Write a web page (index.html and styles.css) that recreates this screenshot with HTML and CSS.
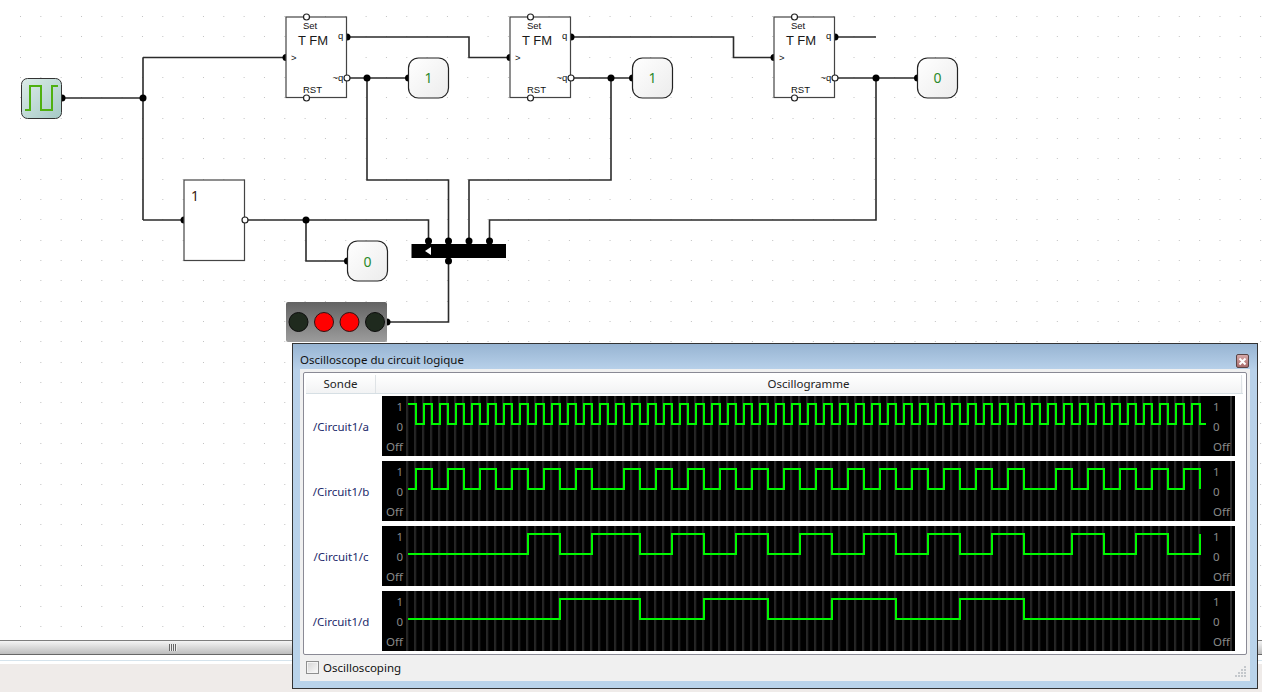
FILE: index.html
```html
<!DOCTYPE html>
<html lang="en">
<head>
    <meta charset="UTF-8">
    <title>Oscilloscope du circuit logique</title>
    <link rel="stylesheet" href="styles.css">
</head>
<body>
    <div class="canvas">
        <svg class="circuit" width="1262" height="640" viewBox="0 0 1262 640">
            <defs>
                <linearGradient id="clockFill" x1="0" y1="0" x2="1" y2="1">
                    <stop offset="0" stop-color="#dcebe8"/>
                    <stop offset="1" stop-color="#a5c9c6"/>
                </linearGradient>
                <linearGradient id="displayFill" x1="0" y1="0" x2="1" y2="1">
                    <stop offset="0" stop-color="#ffffff"/>
                    <stop offset="1" stop-color="#ececec"/>
                </linearGradient>
                <linearGradient id="ledFill" x1="0" y1="0" x2="0" y2="1">
                    <stop offset="0" stop-color="#636363"/>
                    <stop offset="1" stop-color="#9c9c9c"/>
                </linearGradient>
            </defs>

            <!-- grid dots -->
            <path class="dots" d="M20 16.5H1262M20 36.5H1262M20 57.5H1262M20 77.5H1262M20 97.5H1262M20 118.5H1262M20 138.5H1262M20 158.5H1262M20 179.5H1262M20 199.5H1262M20 219.5H1262M20 240.5H1262M20 260.5H1262M20 280.5H1262M20 301.5H1262M20 321.5H1262M20 341.5H1262M20 362.5H1262M20 382.5H1262M20 402.5H1262M20 423.5H1262M20 443.5H1262M20 463.5H1262M20 484.5H1262M20 504.5H1262M20 524.5H1262M20 545.5H1262M20 565.5H1262M20 585.5H1262M20 606.5H1262M20 626.5H1262"/>

            <!-- wires -->
            <path class="wire" d="M62 98H143M143 57.5V220M143 57.5H285M143 220H183"/>
            <path class="wire" d="M348 37H469V57.5H509M571 37H733.5V57.5H773M836 37H876"/>
            <path class="wire" d="M347 78H408M571 78H632M835 78H917"/>
            <path class="wire" d="M367 78V180H448.5V243M611 78V180H469V243M876 78V220H489.5V243"/>
            <path class="wire" d="M245 220H428.5V243M306 220V261H346M448.5 261V322H389"/>

            <!-- clock -->
            <circle class="pin" cx="62" cy="98" r="3.5"/>
            <rect class="clock" x="21.5" y="78.5" width="40" height="40" rx="6"/>
            <path class="clock-wave" d="M25 110H30V86H41V110H52V86H58"/>

            <!-- flip-flops -->
            <g>
                <circle class="pin" cx="347" cy="37" r="3.5"/>
                <circle class="pin" cx="286" cy="57.5" r="3.5"/>
                <rect class="block" x="286" y="17" width="60.5" height="80.5"/>
                <text class="small" x="303" y="29">Set</text>
                <text class="name" x="298" y="44.5">T FM</text>
                <text class="small" x="338" y="39">q</text>
                <text class="small" x="291" y="61">&gt;</text>
                <text class="small" x="332.5" y="81">~q</text>
                <text class="small" x="303" y="93">RST</text>
                <circle class="pin-open" cx="306.5" cy="17" r="3"/>
                <circle class="pin-open" cx="306.5" cy="98" r="3"/>
                <circle class="pin-open" cx="347" cy="78" r="3"/>
            </g>
            <g transform="translate(224 0)">
                <circle class="pin" cx="347" cy="37" r="3.5"/>
                <circle class="pin" cx="286" cy="57.5" r="3.5"/>
                <rect class="block" x="286" y="17" width="60.5" height="80.5"/>
                <text class="small" x="303" y="29">Set</text>
                <text class="name" x="298" y="44.5">T FM</text>
                <text class="small" x="338" y="39">q</text>
                <text class="small" x="291" y="61">&gt;</text>
                <text class="small" x="332.5" y="81">~q</text>
                <text class="small" x="303" y="93">RST</text>
                <circle class="pin-open" cx="306.5" cy="17" r="3"/>
                <circle class="pin-open" cx="306.5" cy="98" r="3"/>
                <circle class="pin-open" cx="347" cy="78" r="3"/>
            </g>
            <g transform="translate(488 0)">
                <circle class="pin" cx="347" cy="37" r="3.5"/>
                <circle class="pin" cx="286" cy="57.5" r="3.5"/>
                <rect class="block" x="286" y="17" width="60.5" height="80.5"/>
                <text class="small" x="303" y="29">Set</text>
                <text class="name" x="298" y="44.5">T FM</text>
                <text class="small" x="338" y="39">q</text>
                <text class="small" x="291" y="61">&gt;</text>
                <text class="small" x="332.5" y="81">~q</text>
                <text class="small" x="303" y="93">RST</text>
                <circle class="pin-open" cx="306.5" cy="17" r="3"/>
                <circle class="pin-open" cx="306.5" cy="98" r="3"/>
                <circle class="pin-open" cx="347" cy="78" r="3"/>
            </g>

            <!-- inverter -->
            <circle class="pin" cx="184" cy="220" r="3.5"/>
            <rect class="block" x="184" y="180" width="60.5" height="80.5"/>
            <text class="gate-label" x="191" y="201">1</text>
            <circle class="pin-open" cx="245" cy="220" r="3"/>

            <!-- displays -->
            <circle class="pin" cx="408.5" cy="78" r="3.5"/>
            <rect class="display" x="408.5" y="58" width="40" height="40" rx="10"/>
            <text class="value" x="428.5" y="83">1</text>
            <circle class="pin" cx="632.5" cy="78" r="3.5"/>
            <rect class="display" x="632.5" y="58" width="40" height="40" rx="10"/>
            <text class="value" x="652.5" y="83">1</text>
            <circle class="pin" cx="917.5" cy="78" r="3.5"/>
            <rect class="display" x="917.5" y="58" width="40" height="40" rx="10"/>
            <text class="value" x="937.5" y="83">0</text>
            <circle class="pin" cx="347.5" cy="261" r="3.5"/>
            <rect class="display" x="347.5" y="241" width="40" height="40" rx="10"/>
            <text class="value" x="367.5" y="267">0</text>

            <!-- splitter bus -->
            <rect class="bus" x="411.5" y="244" width="94.5" height="14"/>
            <path class="bus-arrow" d="M425 251L431 247V255Z"/>

            <!-- led bar -->
            <circle class="pin" cx="387" cy="322" r="3.5"/>
            <rect class="led-box" x="286" y="302" width="101" height="40" rx="2"/>
            <circle class="led-off" cx="298.5" cy="322" r="9.5"/>
            <circle class="led-on" cx="324" cy="322" r="9.5"/>
            <circle class="led-on" cx="349.5" cy="322" r="9.5"/>
            <circle class="led-off" cx="375" cy="322" r="9.5"/>

            <!-- junctions and bus pins -->
            <circle class="pin" cx="143" cy="98" r="3.5"/>
            <circle class="pin" cx="367" cy="78" r="3.5"/>
            <circle class="pin" cx="611" cy="78" r="3.5"/>
            <circle class="pin" cx="876" cy="78" r="3.5"/>
            <circle class="pin" cx="306" cy="220" r="3.5"/>
            <circle class="pin" cx="428.5" cy="241" r="3.5"/>
            <circle class="pin" cx="448.5" cy="241" r="3.5"/>
            <circle class="pin" cx="469" cy="241" r="3.5"/>
            <circle class="pin" cx="489.5" cy="241" r="3.5"/>
            <circle class="pin" cx="448.5" cy="261" r="3.5"/>
        </svg>
    </div>

    <div class="splitter"><span class="splitter-grip"></span></div>
    <div class="status-strip"></div>

    <!-- Oscilloscope window -->
    <div class="scope-window">
        <div class="scope-title">
            <span>Oscilloscope du circuit logique</span>
            <button class="close-btn" aria-label="Fermer">
                <svg width="9" height="9" viewBox="0 0 9 9"><path d="M1.5 1.5L7.5 7.5M7.5 1.5L1.5 7.5"/></svg>
            </button>
        </div>
        <div class="scope-client">
            <div class="scope-grid">
                <div class="grid-header">
                    <div class="col-probe">Sonde</div>
                    <div class="col-trace">Oscillogramme</div>
                </div>

                <div class="rows">
                    <div class="row">
                        <div class="probe">/Circuit1/a</div>
                        <div class="panel">
                            <div class="scale scale-left"><span>1</span><span>0</span><span>Off</span></div>
                            <svg class="trace" width="800" height="60" viewBox="0 0 800 60">
                                <path d="M2 8H10v20h8v-20h8v20h8v-20h8v20h8v-20h8v20h8v-20h8v20h8v-20h8v20h8v-20h8v20h8v-20h8v20h8v-20h8v20h8v-20h8v20h8v-20h8v20h8v-20h8v20h8v-20h8v20h8v-20h8v20h8v-20h8v20h8v-20h8v20h8v-20h8v20h8v-20h8v20h8v-20h8v20h8v-20h8v20h8v-20h8v20h8v-20h8v20h8v-20h8v20h8v-20h8v20h8v-20h8v20h8v-20h8v20h8v-20h8v20h8v-20h8v20h8v-20h8v20h8v-20h8v20h8v-20h8v20h8v-20h8v20h8v-20h8v20h8v-20h8v20h8v-20h8v20h8v-20h8v20h8v-20h8v20h8v-20h8v20h8v-20h8v20h8v-20h8v20h8v-20h8v20h8v-20h8v20h8v-20h8v20h8v-20h8v20h8v-20h8v20h8v-20h8v20h8v-20h8v20h8v-20h8v20h8v-20h8v20h8v-20h8v20h8v-20h8v20"/>
                            </svg>
                            <div class="scale scale-right"><span>1</span><span>0</span><span>Off</span></div>
                        </div>
                    </div>
                    <div class="row">
                        <div class="probe">/Circuit1/b</div>
                        <div class="panel">
                            <div class="scale scale-left"><span>1</span><span>0</span><span>Off</span></div>
                            <svg class="trace" width="800" height="60" viewBox="0 0 800 60">
                                <path d="M2 28H10v-20h16v20h16v-20h16v20h16v-20h16v20h16v-20h16v20h16v-20h16v20h16v-20h16v20h32v-20h16v20h16v-20h16v20h16v-20h16v20h16v-20h16v20h16v-20h16v20h16v-20h16v20h16v-20h16v20h16v-20h16v20h16v-20h16v20h16v-20h16v20h16v-20h16v20h16v-20h16v20h16v-20h16v20h32v-20h16v20h16v-20h16v20h16v-20h16v20h16v-20h16v20h16v-20h16v20"/>
                            </svg>
                            <div class="scale scale-right"><span>1</span><span>0</span><span>Off</span></div>
                        </div>
                    </div>
                    <div class="row">
                        <div class="probe">/Circuit1/c</div>
                        <div class="panel">
                            <div class="scale scale-left"><span>1</span><span>0</span><span>Off</span></div>
                            <svg class="trace" width="800" height="60" viewBox="0 0 800 60">
                                <path d="M2 28H122V8H154V28H186V8H234V28H266V8H298V28H330V8H362V28H394V8H426V28H458V8H490V28H522V8H554V28H586V8H618V28H666V8H698V28H730V8H762V28H794V8"/>
                            </svg>
                            <div class="scale scale-right"><span>1</span><span>0</span><span>Off</span></div>
                        </div>
                    </div>
                    <div class="row">
                        <div class="probe">/Circuit1/d</div>
                        <div class="panel">
                            <div class="scale scale-left"><span>1</span><span>0</span><span>Off</span></div>
                            <svg class="trace" width="800" height="60" viewBox="0 0 800 60">
                                <path d="M2 28H154V8H234V28H298V8H362V28H426V8H490V28H554V8H618V28H794"/>
                            </svg>
                            <div class="scale scale-right"><span>1</span><span>0</span><span>Off</span></div>
                        </div>
                    </div>
                </div>
            </div>

            <div class="scope-footer">
                <label class="check"><span class="check-box"></span>Oscilloscoping</label>
                <svg class="resize-grip" width="11" height="12" viewBox="0 0 11 12">
                    <path d="M9 0h2v2H9zM6 3h2v2H6zM9 3h2v2H9zM3 6h2v2H3zM6 6h2v2H6zM9 6h2v2H9zM0 9h2v2H0zM3 9h2v2H3zM6 9h2v2H6zM9 9h2v2H9z"/>
                </svg>
            </div>
        </div>
    </div>
</body>
</html>
```

FILE: styles.css
```css
body {
    margin: 0;
    height: 100vh;
    overflow: hidden;
    display: flex;
    flex-direction: column;
    background: #efebe9;
    font-family: 'Noto Sans', sans-serif;
}

/* circuit canvas */
.canvas {
    height: 640px;
    flex: none;
    background: white;
}
.circuit {
    display: block;
}
.dots {
    fill: none;
    stroke: #c2c2c2;
    stroke-width: 1;
    stroke-dasharray: 1 19.33;
}
.wire {
    fill: none;
    stroke: #2b2b2b;
    stroke-width: 1.6;
}
.block {
    fill: white;
    stroke: #444;
    stroke-width: 1.2;
}
.pin {
    fill: black;
}
.pin-open {
    fill: white;
    stroke: #222;
    stroke-width: 1.2;
}
.clock {
    fill: url(#clockFill);
    stroke: #333;
}
.clock-wave {
    fill: none;
    stroke: #4fb010;
    stroke-width: 2;
}
.display {
    fill: url(#displayFill);
    stroke: #222;
    stroke-width: 1.2;
}
.value {
    font-size: 14px;
    fill: #2a8a2a;
    text-anchor: middle;
}
.small {
    font-family: 'Liberation Sans', sans-serif;
    font-size: 9.5px;
    fill: #111;
}
.name {
    font-family: 'Liberation Sans', sans-serif;
    font-size: 13px;
    fill: #1a1a1a;
}
.gate-label {
    font-size: 14px;
    fill: #3a1a10;
}
.bus {
    fill: black;
}
.bus-arrow {
    fill: white;
}
.led-box {
    fill: url(#ledFill);
}
.led-off {
    fill: #1f2a1e;
    stroke: #0c0c0c;
}
.led-on {
    fill: #ff0000;
    stroke: #301010;
}

/* bottom of the main window */
.splitter {
    height: 13px;
    flex: none;
    display: flex;
    align-items: center;
    border-top: 1px solid #7d7d7d;
    border-bottom: 1px solid #666;
    background: linear-gradient(#f4f4f4, #bdbdbd);
}
.splitter-grip {
    width: 8px;
    height: 7px;
    margin-left: 169px;
    background: repeating-linear-gradient(90deg, #666 0, #666 1px, #eee 1px, #eee 2px);
}
.status-strip {
    height: 9px;
    flex: none;
    box-sizing: border-box;
    background: linear-gradient(white 5px, #d5e3ec 5px, #d5e3ec 6px, white 6px);
}

/* oscilloscope window */
.scope-window {
    position: absolute;
    left: 292px;
    top: 343px;
    width: 966px;
    height: 346px;
    box-sizing: border-box;
    border: 1px solid #333;
    padding: 0 7px 7px;
    display: flex;
    flex-direction: column;
    background: linear-gradient(#97b4d2, #b8d1ea 26px, #b9d3ea);
}
.scope-title {
    height: 25px;
    flex: none;
    box-sizing: border-box;
    display: flex;
    justify-content: space-between;
    align-items: flex-end;
    padding-bottom: 2px;
    font-size: 11.5px;
    color: #111;
}
.close-btn {
    width: 13px;
    height: 14px;
    margin: 0 1px -1px 0;
    padding: 0;
    display: flex;
    align-items: center;
    justify-content: center;
    border: 1px solid #5a4444;
    border-radius: 2px;
    background: linear-gradient(#d6a8a8, #a86a6a);
}
.close-btn path {
    fill: none;
    stroke: white;
    stroke-width: 2;
}
.scope-client {
    flex: 1;
    padding: 3px;
    background: #f0f0f0;
    display: flex;
    flex-direction: column;
}
.scope-grid {
    height: 283px;
    flex: none;
    box-sizing: border-box;
    border: 1px solid #8a8a95;
    border-radius: 2px;
    padding: 2px 3px 2px 2px;
    background: white;
    font-size: 11.5px;
}
.grid-header {
    display: flex;
    height: 18px;
    border-bottom: 1px solid #d6dfe4;
    background: linear-gradient(white, #f2f3f4);
    color: #222;
    line-height: 18px;
    text-align: center;
}
.col-probe {
    width: 69px;
    border-right: 1px solid #dfe3e6;
}
.col-trace {
    flex: 1;
    border-right: 1px solid #dfe3e6;
    margin-right: 1px;
}
.rows {
    margin-top: 2px;
    display: flex;
    flex-direction: column;
    gap: 5px;
}
.row {
    display: grid;
    grid-template-columns: 70px 853px;
    column-gap: 6px;
    align-items: center;
}
.probe {
    text-align: center;
    color: #1c2a6b;
}
.panel {
    height: 60px;
    display: flex;
    background: black;
}
.scale {
    display: flex;
    flex-direction: column;
    padding-top: 1px;
    box-sizing: border-box;
    font-size: 11.5px;
    line-height: 20px;
    color: #8a8a8a;
}
.scale-left {
    width: 24px;
    text-align: right;
    padding-right: 3px;
}
.scale-right {
    width: 29px;
    padding-left: 7px;
    background: linear-gradient(#2c2c2c, #2c2c2c) 24px 0 / 2px 100% no-repeat;
}
.trace {
    display: block;
    background: linear-gradient(90deg, #1e1e1e 0, #2e2e2e 1px, #161616 2px, #000 3px, #000 8px) 0 0 / 8px 100%;
}
.trace path {
    fill: none;
    stroke: #00f800;
    stroke-width: 2;
}
.scope-footer {
    flex: 1;
    display: flex;
    justify-content: space-between;
    padding: 5px 1px 0 3px;
    font-size: 11.5px;
    color: #111;
}
.check {
    display: flex;
    align-items: center;
    gap: 4px;
    height: 14px;
}
.check-box {
    width: 13px;
    height: 13px;
    box-sizing: border-box;
    border: 1px solid #8e8f8f;
    box-shadow: inset 0 0 0 1px #f4f4f4;
    background: linear-gradient(135deg, #d4d4d4, #fafafa);
}
.resize-grip {
    align-self: flex-end;
    fill: #c4c8cc;
}
```
